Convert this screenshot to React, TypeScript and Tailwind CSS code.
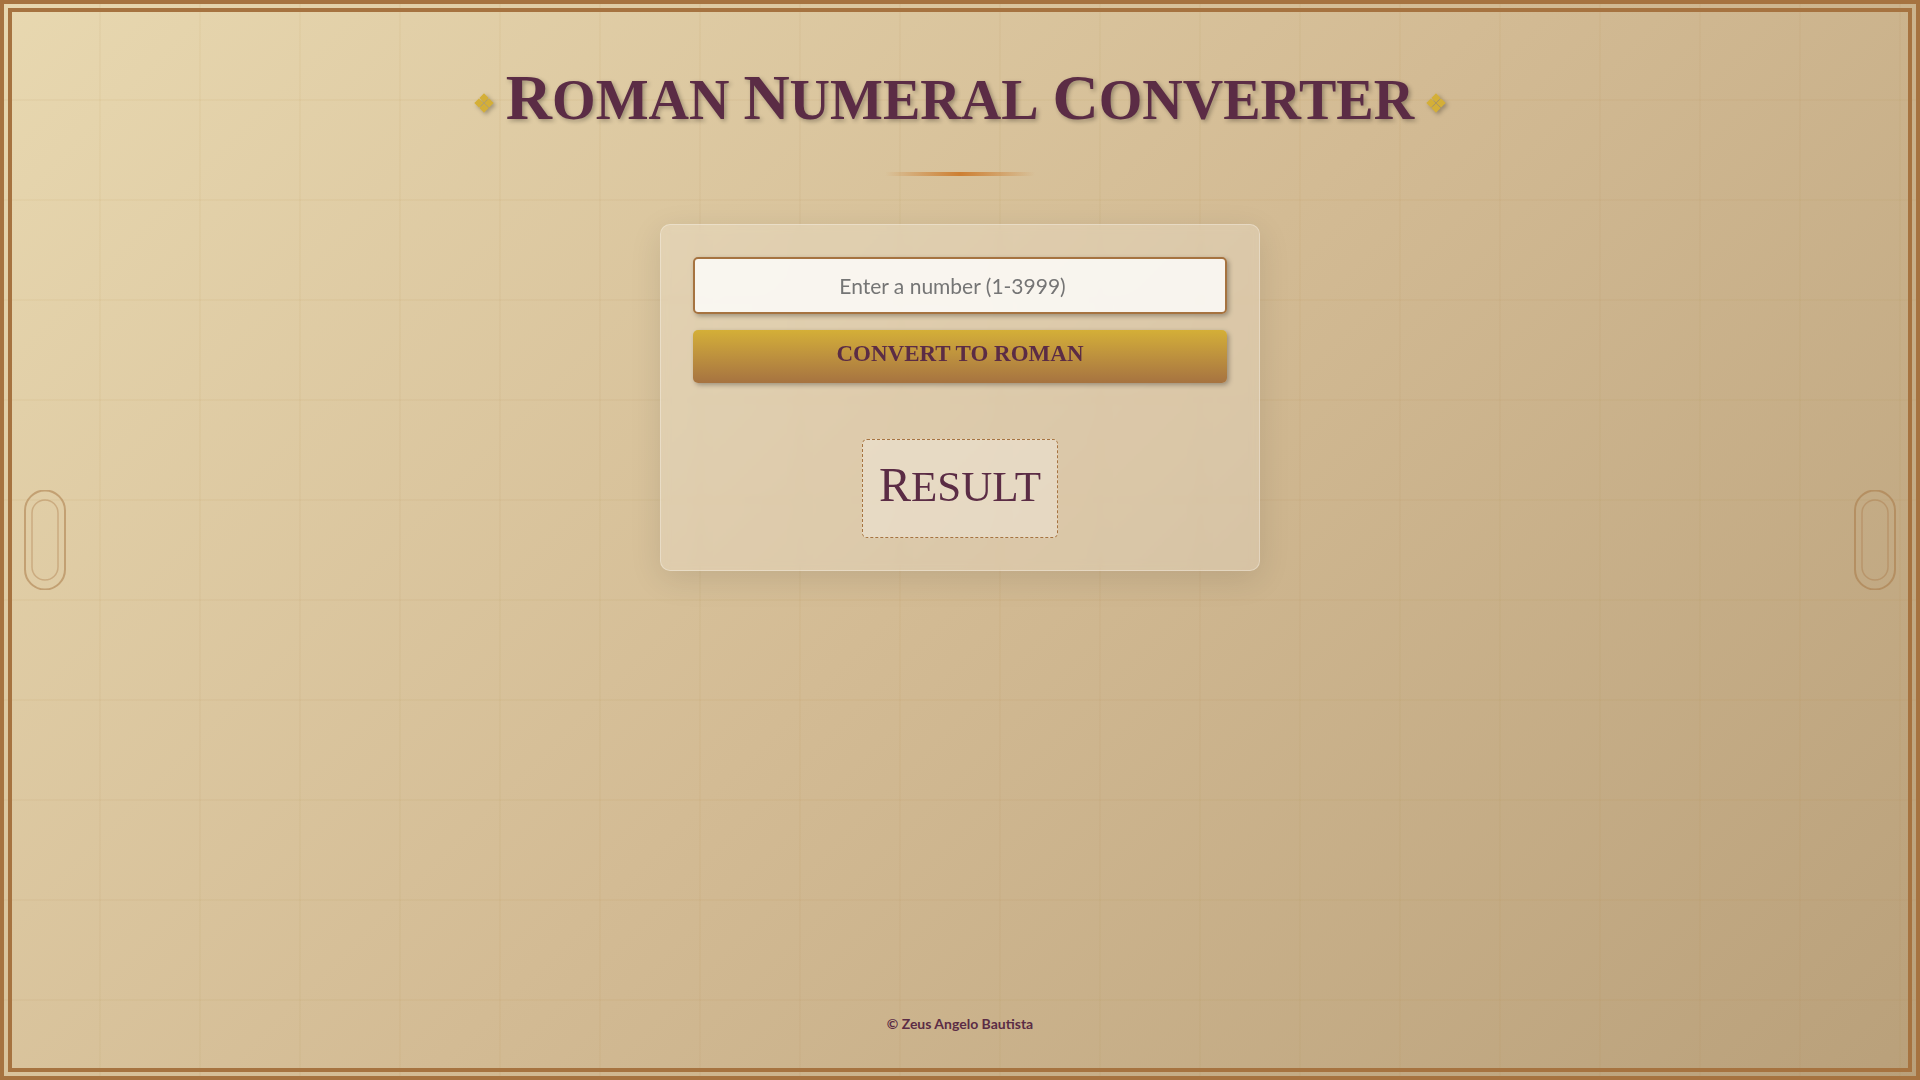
import { useState, type FormEvent } from "react";

const SERIF = "font-['Liberation_Serif',serif]";

const NUMERALS: [number, string][] = [
  [1000, "M"], [900, "CM"], [500, "D"], [400, "CD"],
  [100, "C"], [90, "XC"], [50, "L"], [40, "XL"],
  [10, "X"], [9, "IX"], [5, "V"], [4, "IV"], [1, "I"],
];

function toRoman(value: number): string {
  let rest = value;
  let out = "";
  for (const [size, mark] of NUMERALS) {
    while (rest >= size) {
      out += mark;
      rest -= size;
    }
  }
  return out;
}

function Column() {
  return (
    <svg width="42" height="100" viewBox="0 0 42 100" fill="none" stroke="#a67340" aria-hidden="true">
      <rect x="1" y="0.5" width="40" height="99" rx="20" strokeWidth="2" strokeOpacity="0.5" />
      <rect x="8" y="10" width="26" height="80" rx="13" strokeWidth="1.5" strokeOpacity="0.36" />
    </svg>
  );
}

function Ornament() {
  return (
    <svg
      width="20"
      height="20"
      viewBox="0 0 20 20"
      fill="#d4af37"
      aria-hidden="true"
      className="mt-2 shrink-0 overflow-visible drop-shadow-[2px_2px_2px_rgba(0,0,0,0.3)]"
    >
      <path d="M10 0.3 14.6 4.9 10 9.6 5.4 4.9ZM15.1 5.4 19.7 10 15.1 14.6 10.4 10ZM10 10.4 14.6 15.1 10 19.7 5.4 15.1ZM4.9 5.4 9.6 10 4.9 14.6 0.3 10Z" />
    </svg>
  );
}

export default function App() {
  const [value, setValue] = useState("");
  const [result, setResult] = useState("Result");

  function convert(event: FormEvent) {
    event.preventDefault();
    const n = Number(value);
    setResult(Number.isInteger(n) && n >= 1 && n <= 3999 ? toRoman(n) : "Invalid");
  }

  return (
    <div className="relative flex min-h-screen flex-col items-center bg-[linear-gradient(135deg,#e8d8b0_0%,#d3bb94_50%,#b9a07a_100%)] px-8 pt-16 pb-[46px] font-['Lato',sans-serif] text-[#5b2c45]">
      <div className="pointer-events-none absolute inset-0 bg-[linear-gradient(180deg,rgba(170,130,60,0.06)_2px,transparent_2px),linear-gradient(90deg,rgba(170,130,60,0.06)_2px,transparent_2px)] bg-size-[100px_100px] bg-position-[99px_99px]" />
      <div className="pointer-events-none absolute inset-0 border-[12px] border-double border-[#a67340]" />
      <div className="pointer-events-none fixed top-1/2 left-6 -translate-y-1/2"><Column /></div>
      <div className="pointer-events-none fixed top-1/2 right-6 -translate-y-1/2"><Column /></div>

      <header className="relative flex flex-col items-center gap-[38px]">
        <h1 className={`${SERIF} flex items-center gap-3 text-[56px] leading-[68px] font-bold uppercase [text-shadow:2px_2px_4px_rgba(0,0,0,0.3)]`}>
          <Ornament />
          <span>
            <span className="inline-block first-letter:text-[64px]">Roman</span>{" "}
            <span className="inline-block first-letter:text-[64px]">Numeral</span>{" "}
            <span className="inline-block first-letter:text-[64px]">Converter</span>
          </span>
          <Ornament />
        </h1>
        <div className="h-1 w-[150px] bg-linear-to-r from-transparent via-[#cd7f32] to-transparent" />
      </header>

      <main className="relative mt-12 flex w-full max-w-[600px] flex-col items-center gap-14 rounded-[10px] border border-white/30 bg-white/20 p-8 shadow-[0_8px_32px_rgba(0,0,0,0.1)] backdrop-blur-[5px]">
        <form onSubmit={convert} noValidate className="flex w-full flex-col gap-4">
          <input
            type="number"
            min={1}
            max={3999}
            aria-label="Number to convert"
            placeholder="Enter a number (1-3999)"
            value={value}
            onChange={(e) => setValue(e.target.value)}
            className="h-[57px] w-full rounded-[5px] border-2 border-[#a67340] bg-white/80 px-4 text-center text-[21px] shadow-[2px_2px_5px_rgba(0,0,0,0.3)] placeholder:text-[#757575]"
          />
          <button
            type="submit"
            className={`${SERIF} h-[53px] w-full rounded-[5px] bg-linear-to-b from-[#d4af37] to-[#a67340] pb-1 text-[23px] font-bold uppercase shadow-[2px_2px_5px_rgba(0,0,0,0.3)]`}
          >
            Convert to Roman
          </button>
        </form>
        <output className={`${SERIF} flex h-[99px] min-w-[196px] items-center justify-center rounded-[5px] border border-dashed border-[#a67340] bg-white/30 px-4 pb-2 text-[43px] uppercase`}>
          <span className="inline-block first-letter:text-[48px]">{result}</span>
        </output>
      </main>

      <footer className="relative mt-auto text-[14px] leading-5 font-bold">© Zeus Angelo Bautista</footer>
    </div>
  );
}
